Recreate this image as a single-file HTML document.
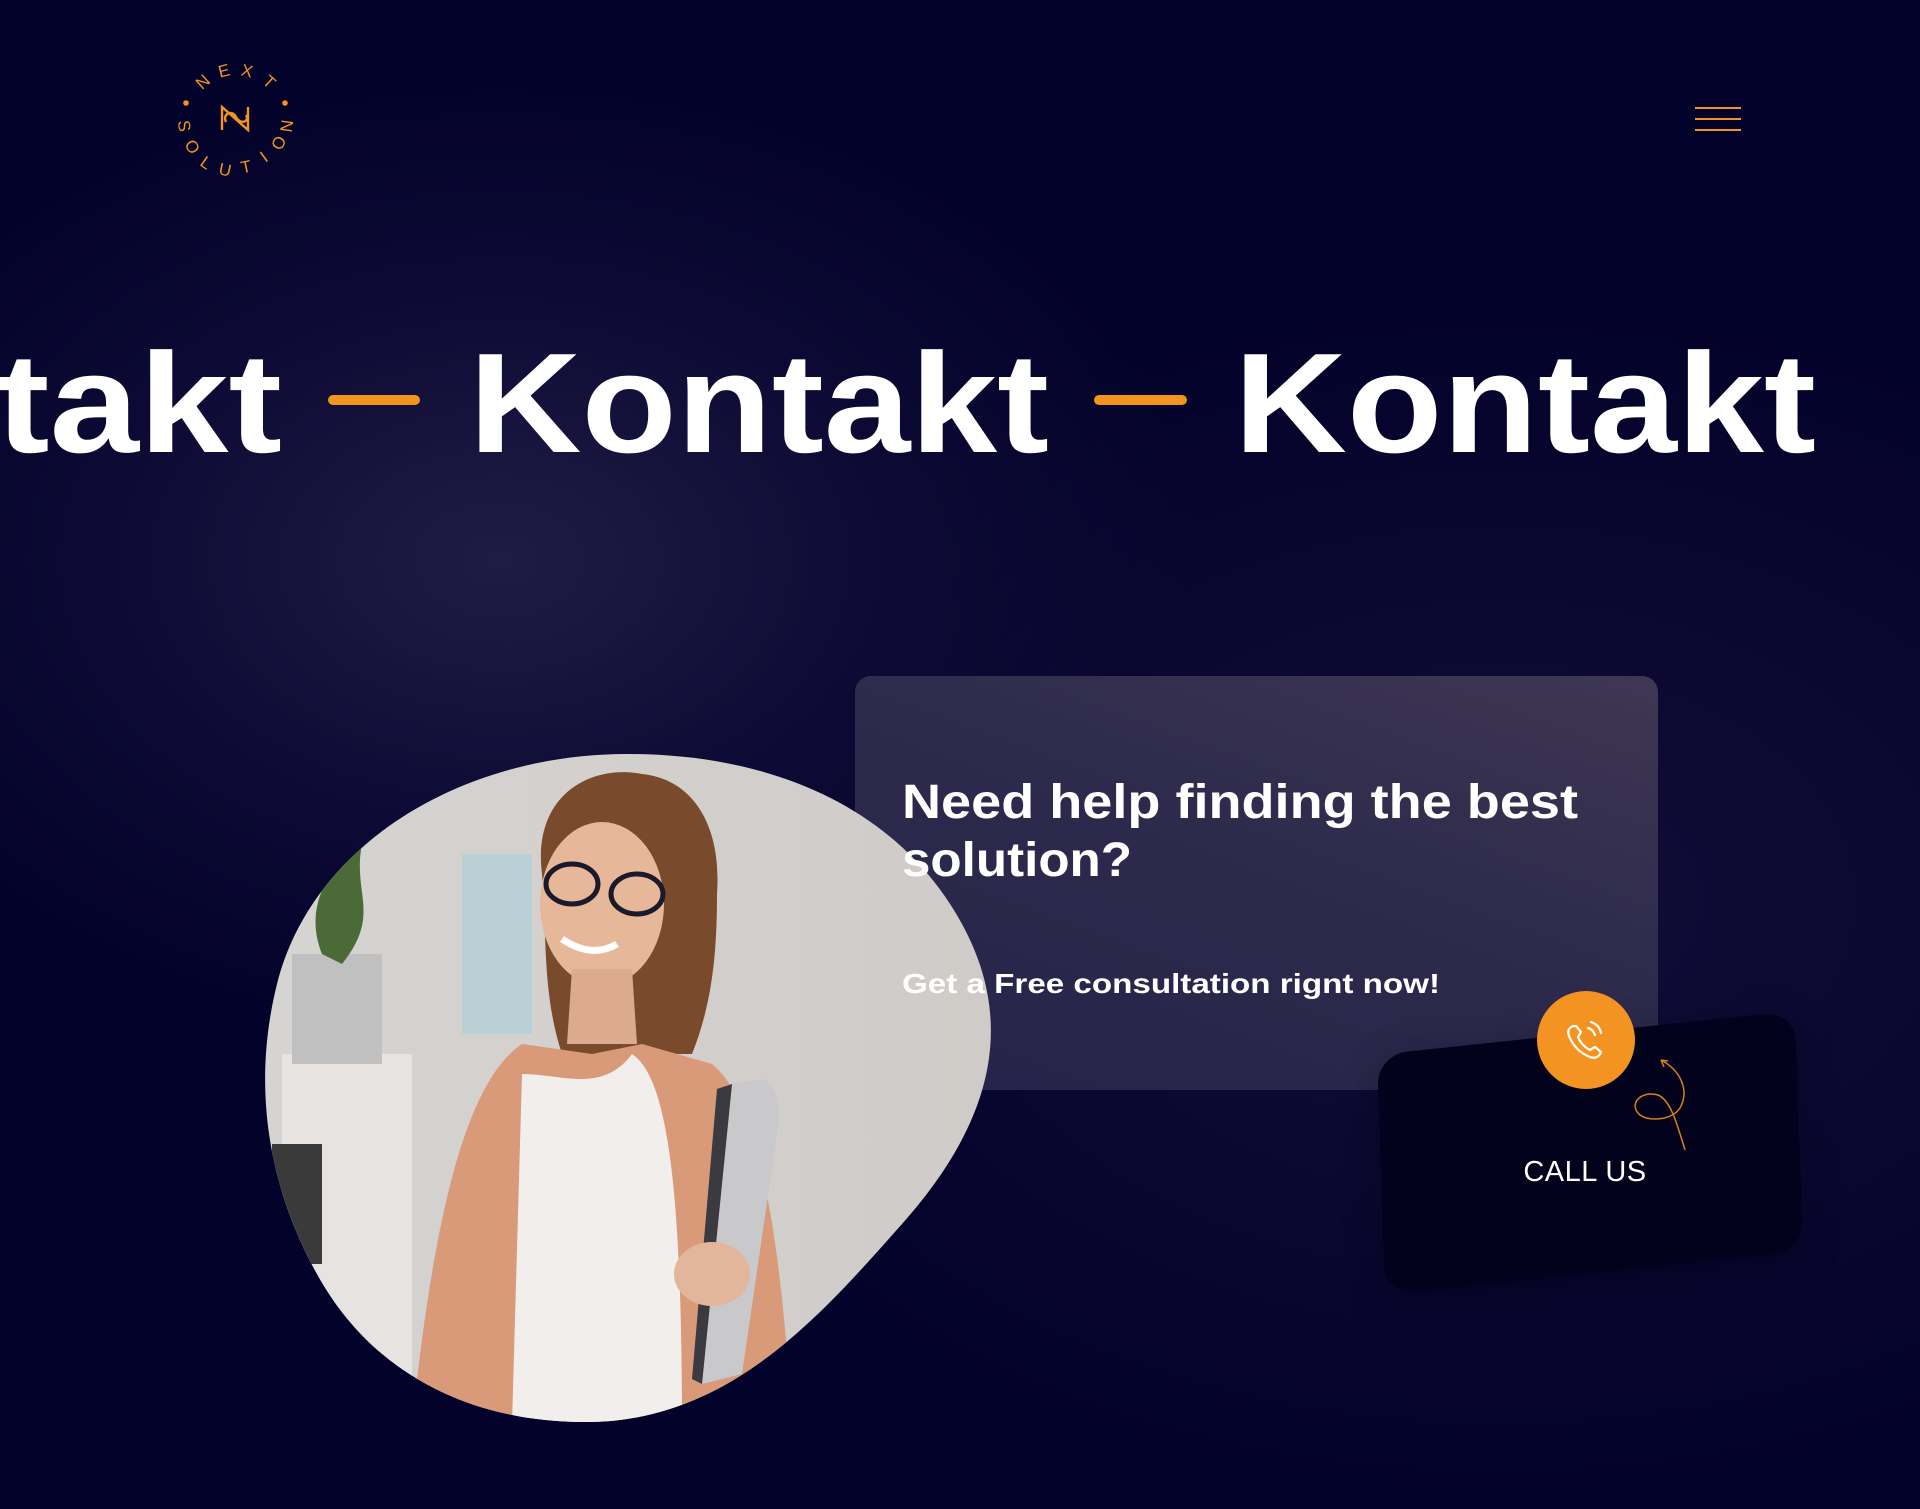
<!DOCTYPE html>
<html><head><meta charset="utf-8"><style>
html,body{margin:0;padding:0;}
body{width:1920px;height:1509px;overflow:hidden;position:relative;font-family:"Liberation Sans",sans-serif;
background:radial-gradient(ellipse 700px 480px at 500px 560px,#1f1c44 0%,#0d0b35 55%,rgba(4,3,42,0) 100%),radial-gradient(ellipse 900px 600px at 1500px 900px,#120d38 0%,rgba(4,3,42,0) 100%),#03022a;}
.abs{position:absolute;}
.card{left:855px;top:676px;width:803px;height:414px;border-radius:16px;background:linear-gradient(200deg,#3f3752 0%,#2d2a4c 45%,#25234a 100%);}
.call{left:1380px;top:1033px;width:420px;height:240px;border-radius:30px;background:#03021c;transform:rotate(-6deg) skewX(-4deg);box-shadow:0 10px 40px rgba(0,0,0,.3);}
</style></head><body>

<!-- logo -->
<svg class="abs" style="left:0;top:0" width="340" height="200">
<g fill="#f39422" font-family="Liberation Sans,sans-serif" font-size="17" text-anchor="middle" dominant-baseline="central">
<text transform="translate(203,82) rotate(-42)">N</text>
<text transform="translate(224,71) rotate(-14)">E</text>
<text transform="translate(247,71) rotate(13)">X</text>
<text transform="translate(269,82) rotate(42)">T</text>
<text transform="translate(184,126) rotate(82)">S</text>
<text transform="translate(192,147) rotate(58)">O</text>
<text transform="translate(206,163) rotate(34)">L</text>
<text transform="translate(225,170) rotate(12)">U</text>
<text transform="translate(246,167) rotate(-12)">T</text>
<text transform="translate(264,157) rotate(-36)">I</text>
<text transform="translate(279,143) rotate(-61)">O</text>
<text transform="translate(287,126) rotate(-82)">N</text>
</g>
<circle cx="186" cy="103" r="2.8" fill="#f39422"/><circle cx="285" cy="103" r="2.8" fill="#f39422"/>
<path d="M222,130 V107 L248,130 V107 M226,122 C222,114 232,109 236,117 C240,125 250,122 246,115" fill="none" stroke="#f39422" stroke-width="2.4"/>
</svg>

<!-- hamburger -->
<div class="abs" style="left:1695px;top:107px;width:46px;height:2px;background:#f39422"></div>
<div class="abs" style="left:1695px;top:118px;width:46px;height:2px;background:#f39422"></div>
<div class="abs" style="left:1695px;top:129px;width:46px;height:2px;background:#f39422"></div>

<!-- headline -->
<svg class="abs" style="left:0;top:300px" width="1920" height="180">
<g fill="#fff" font-family="Liberation Sans,sans-serif" font-weight="bold" font-size="142">
<text x="-4" y="152" textLength="286" lengthAdjust="spacingAndGlyphs">takt</text>
<text x="469" y="152" textLength="580" lengthAdjust="spacingAndGlyphs">Kontakt</text>
<text x="1234" y="152" textLength="582" lengthAdjust="spacingAndGlyphs">Kontakt</text>
</g>
<rect x="328" y="95" width="92" height="10" rx="5" fill="#f39422"/>
<rect x="1094" y="95" width="93" height="10" rx="5" fill="#f39422"/>
</svg>

<div class="abs card"></div>
<div class="abs call"></div>

<!-- photo blob -->
<svg class="abs" style="left:262px;top:754px" width="734" height="670" viewBox="0 0 734 670">
<defs>
<clipPath id="b"><path d="M365,0 C520,0 640,60 700,170 C760,280 720,380 640,470 C560,560 470,665 330,668 C210,670 110,620 55,520 C5,430 -10,330 15,230 C50,90 200,0 365,0 Z"/></clipPath>
<linearGradient id="bg" x1="0" x2="1"><stop offset="0" stop-color="#d6d4d2"/><stop offset="1" stop-color="#cfcbc8"/></linearGradient>
</defs>
<g clip-path="url(#b)">
<rect width="734" height="670" fill="url(#bg)"/>
<rect x="200" y="100" width="70" height="180" fill="#b8d0d6"/>
<rect x="20" y="300" width="130" height="370" fill="#e6e3e0"/>
<rect x="30" y="200" width="90" height="110" fill="#c0c0c0"/>
<path d="M60,200 C40,150 70,110 100,90 C90,140 120,160 80,210Z" fill="#4a6a38"/>
<rect x="10" y="390" width="50" height="120" fill="#3a3a3a"/>
<path d="M280,120 C270,40 330,10 380,20 C430,25 460,70 455,140 C455,200 450,250 430,300 L300,300 C280,240 285,180 280,120Z" fill="#7a4a2c"/>
<ellipse cx="340" cy="150" rx="62" ry="82" fill="#e7b79a"/>
<path d="M310,215 L370,215 L375,290 L305,290Z" fill="#dcaa8c"/>
<ellipse cx="310" cy="130" rx="26" ry="20" fill="none" stroke="#1a1a2a" stroke-width="5"/>
<ellipse cx="375" cy="140" rx="26" ry="20" fill="none" stroke="#1a1a2a" stroke-width="5"/>
<path d="M300,185 Q330,205 355,190" stroke="#fff" stroke-width="7" fill="none"/>
<path d="M150,670 C170,480 200,330 260,290 L330,300 L380,290 L450,310 C500,350 520,500 530,670Z" fill="#d89a78"/>
<path d="M250,670 L260,320 C300,320 340,340 370,300 C400,320 420,400 420,670Z" fill="#f2eeec"/>
<path d="M470,330 L500,325 C515,330 520,350 515,380 L480,620 L440,630 Z" fill="#c9c9cc"/>
<path d="M455,335 L470,330 L440,630 L430,625Z" fill="#3a3a40"/>
<ellipse cx="450" cy="520" rx="38" ry="32" fill="#e3b59a"/>
</g>
</svg>

<!-- card text -->
<svg class="abs" style="left:880px;top:760px" width="760" height="260">
<g fill="#fff" font-family="Liberation Sans,sans-serif" font-weight="bold">
<text x="22" y="58" font-size="48" textLength="676" lengthAdjust="spacingAndGlyphs">Need help finding the best</text>
<text x="22" y="116" font-size="48" textLength="230" lengthAdjust="spacingAndGlyphs">solution?</text>
<text x="22" y="233" font-size="28" textLength="538" lengthAdjust="spacingAndGlyphs">Get a Free consultation rignt now!</text>
</g>
</svg>

<!-- call button -->
<div class="abs" style="left:1537px;top:991px;width:98px;height:98px;border-radius:50%;background:#f39422"></div>
<svg class="abs" style="left:1560px;top:1014px" width="54" height="54" viewBox="0 0 54 54">
<path d="M14,12 C9,13 7,17 9,22 C13,32 20,39 30,43 C35,45 39,43 41,38 L35,33 L30,36 C24,33 20,28 18,23 L21,18 L16,12 Z" fill="none" stroke="#fff" stroke-width="2.2" stroke-linejoin="round"/>
<path d="M28,14 C32,15 34,18 35,21 M31,8 C37,10 40,14 41,19" fill="none" stroke="#fff" stroke-width="2.2" stroke-linecap="round"/>
</svg>
<svg class="abs" style="left:1620px;top:1050px" width="80" height="110">
<path d="M41,10 C60,20 70,40 60,58 C52,70 30,72 20,65 C8,55 20,40 38,45 C50,50 56,70 65,100" fill="none" stroke="#d9801d" stroke-width="1.5"/>
<path d="M41,10 L44,17 M41,10 L48,11" stroke="#d9801d" stroke-width="1.5"/>
</svg>
<div class="abs" style="left:1480px;top:1156px;width:210px;text-align:center;color:#fff;font-size:29px;letter-spacing:0.5px;font-weight:300">CALL US</div>

</body></html>
